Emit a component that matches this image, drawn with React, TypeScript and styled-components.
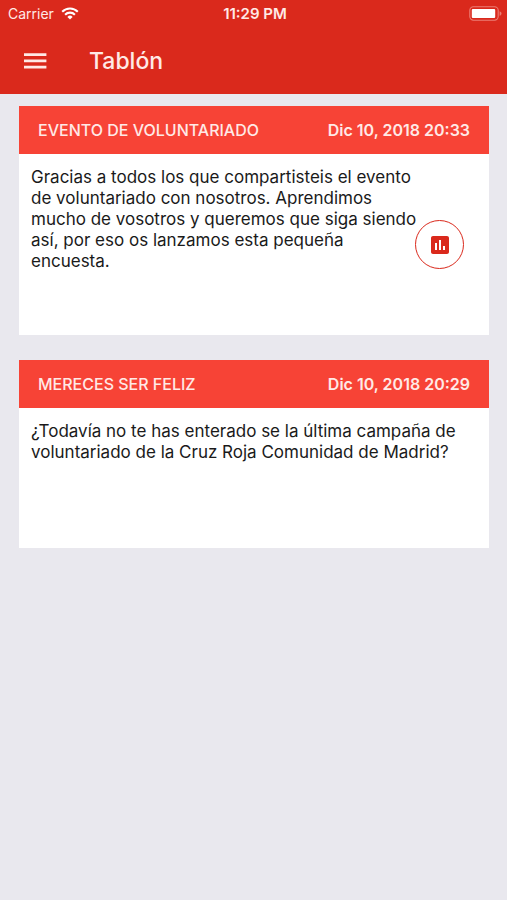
import React from "react";
import styled, { createGlobalStyle } from "styled-components";

const colors = {
  bar: "#da291c",
  heading: "#f74336",
  page: "#e9e8ee",
  text: "#1a1a1a",
  light: "#ffe9e6",
};

const GlobalStyle = createGlobalStyle`
  *, *::before, *::after { box-sizing: border-box; }
  body {
    margin: 0;
    background: ${colors.page};
    font-family: Inter, "Liberation Sans", sans-serif;
  }
`;

const Screen = styled.div`
  min-height: 100vh;
  background: ${colors.page};
`;

const TopBar = styled.header`
  background: ${colors.bar};
  color: ${colors.light};
`;

const StatusBar = styled.div`
  display: grid;
  grid-template-columns: 1fr auto 1fr;
  align-items: center;
  height: 27px;
  padding: 0 5px 0 8px;
  font-size: 14px;
  line-height: 20px;
`;

const Carrier = styled.span`
  display: flex;
  align-items: center;
  gap: 7px;
`;

const Clock = styled.time`
  font-size: 15px;
  font-weight: 600;
`;

const BatterySlot = styled.span`
  display: flex;
  justify-content: flex-end;
`;

const NavBar = styled.div`
  display: flex;
  align-items: center;
  gap: 36px;
  height: 67px;
  padding: 0 17px;
`;

const MenuButton = styled.button`
  display: flex;
  align-items: center;
  justify-content: center;
  width: 36px;
  height: 36px;
  padding: 0;
  border: 0;
  background: none;
  color: inherit;
  cursor: pointer;
`;

const Title = styled.h1`
  margin: 0;
  font-size: 23px;
  line-height: 32px;
  font-weight: 500;
`;

const Board = styled.main`
  display: flex;
  flex-direction: column;
  gap: 25px;
  padding: 12px 18px 24px 19px;
`;

const Card = styled.article`
  background: #fff;
`;

const CardHeader = styled.header`
  display: flex;
  align-items: center;
  justify-content: space-between;
  gap: 12px;
  min-height: 48px;
  padding: 0 19px;
  background: ${colors.heading};
  color: ${colors.light};
  font-size: 16px;
  line-height: 20px;
`;

const CardTitle = styled.h2`
  margin: 0;
  font-size: inherit;
  font-weight: 500;
`;

const CardDate = styled.time`
  font-weight: 600;
  white-space: nowrap;
`;

const CardBody = styled.div`
  display: flex;
  min-height: 140px;
  padding: 0 25px 0 12px;
`;

const Message = styled.p`
  flex: 1;
  margin: 0;
  padding: 13px 0 63px;
  color: ${colors.text};
  font-size: 17px;
  line-height: 21px;
`;

const SurveyButton = styled.button`
  display: flex;
  align-items: center;
  align-self: center;
  justify-content: center;
  flex: none;
  width: 49px;
  height: 49px;
  margin-left: -4px;
  padding: 0;
  border: 1px solid ${colors.bar};
  border-radius: 50%;
  background: #fff;
  color: ${colors.bar};
  cursor: pointer;
`;

const WifiIcon = () => (
  <svg width="18" height="13" viewBox="0 0 18 13" fill="none" stroke="#fff" strokeWidth="2.1" aria-hidden="true">
    <path d="M1.2 4.7a11 11 0 0 1 15.6 0" />
    <path d="M4.1 7.7a6.9 6.9 0 0 1 9.8 0" />
    <path d="M9 12.5 6.4 9.9a3.7 3.7 0 0 1 5.2 0z" fill="#fff" stroke="none" />
  </svg>
);

const BatteryIcon = () => (
  <svg width="33" height="15" viewBox="0 0 33 15" aria-hidden="true">
    <rect x="0.8" y="0.8" width="28.4" height="13.4" rx="3.6" fill="none" stroke="#ec7d74" strokeWidth="1.1" />
    <rect x="2.8" y="3" width="23.4" height="9" rx="1" fill="#fff" />
    <path d="M30.6 5.2c1.3.4 1.9 1.3 1.9 2.3s-.6 1.9-1.9 2.3z" fill="#ec7d74" />
  </svg>
);

const MenuIcon = () => (
  <svg width="24" height="16" viewBox="0 0 24 16" fill="currentColor" aria-hidden="true">
    <path d="M1 .3h22.4V3H1zM1 6.5h22.4v2.700H1zM1 12.700h22.4v2.700H1z" />
  </svg>
);

const PollIcon = () => (
  <svg width="24" height="24" viewBox="0 0 24 24" fill="currentColor" aria-hidden="true">
    <path d="M19 3H5c-1.100 0-2 .9-2 2v14c0 1.100.9 2 2 2h14c1.100 0 2-.9 2-2V5c0-1.100-.9-2-2-2zM9 17H7v-7h2v7zm4 0h-2V7h2v10zm4 0h-2v-4h2v4z" />
  </svg>
);

interface Post {
  title: string;
  date: string;
  dateTime: string;
  message: string;
  survey?: boolean;
}

const posts: Post[] = [
  {
    title: "EVENTO DE VOLUNTARIADO",
    date: "Dic 10, 2018 20:33",
    dateTime: "2018-12-10T20:33",
    message:
      "Gracias a todos los que compartisteis el evento de voluntariado con nosotros. Aprendimos mucho de vosotros y queremos que siga siendo así, por eso os lanzamos esta pequeña encuesta.",
    survey: true,
  },
  {
    title: "MERECES SER FELIZ",
    date: "Dic 10, 2018 20:29",
    dateTime: "2018-12-10T20:29",
    message:
      "¿Todavía no te has enterado se la última campaña de voluntariado de la Cruz Roja Comunidad de Madrid?",
  },
];

export default function App() {
  return (
    <>
      <GlobalStyle />
      <Screen>
        <TopBar>
          <StatusBar>
            <Carrier>
              Carrier
              <WifiIcon />
            </Carrier>
            <Clock>11:29 PM</Clock>
            <BatterySlot>
              <BatteryIcon />
            </BatterySlot>
          </StatusBar>
          <NavBar>
            <MenuButton type="button" aria-label="Menú">
              <MenuIcon />
            </MenuButton>
            <Title>Tablón</Title>
          </NavBar>
        </TopBar>
        <Board>
          {posts.map((post) => (
            <Card key={post.dateTime}>
              <CardHeader>
                <CardTitle>{post.title}</CardTitle>
                <CardDate dateTime={post.dateTime}>{post.date}</CardDate>
              </CardHeader>
              <CardBody>
                <Message>{post.message}</Message>
                {post.survey && (
                  <SurveyButton type="button" aria-label="Abrir encuesta">
                    <PollIcon />
                  </SurveyButton>
                )}
              </CardBody>
            </Card>
          ))}
        </Board>
      </Screen>
    </>
  );
}
